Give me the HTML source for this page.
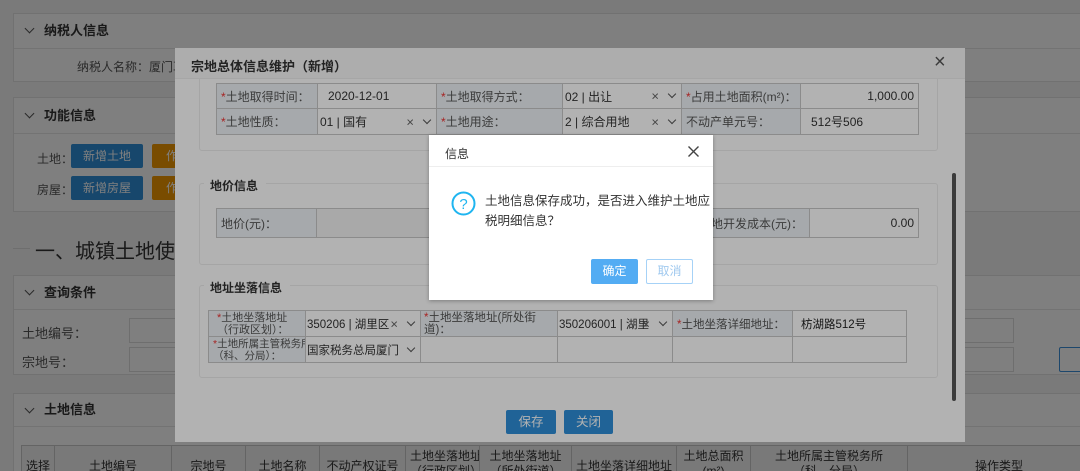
<!DOCTYPE html>
<html style="overflow:hidden;width:1080px;height:471px"><head><meta charset="utf-8"><style>
*{box-sizing:border-box;margin:0;padding:0}
body{width:1080px;height:471px;overflow:hidden;position:relative;background:#f4f4f4;font-family:"Liberation Sans","Noto Sans CJK SC",sans-serif;font-size:12px;color:#333}
.a{position:absolute}
.panel{position:absolute;border:1px solid #e2e2e2;background:#fff}
.ph{position:absolute;left:0;right:0;top:0;border-bottom:1px solid #e6e6e6;font-weight:bold;font-size:13px;padding-left:30px}
.chev{position:absolute;left:12px;width:7px;height:7px;border-right:1.5px solid #555;border-bottom:1.5px solid #555;transform:rotate(45deg)}
.btn{position:absolute;color:#fff;text-align:center;font-size:12px;line-height:24px;border-radius:2px}
.tb{position:absolute;border-collapse:collapse;table-layout:fixed;font-size:12px}
.tb td{border:1px solid #c8c8c8;padding:0 4px;white-space:nowrap;overflow:hidden}
.lb{background:#eef3f6;color:#555}
.r{color:#e33}
.sel{position:relative}
.x{position:absolute;right:22px;top:50%;transform:translateY(-50%);color:#666;font-size:13px}
.dn{position:absolute;right:6px;top:50%;width:6px;height:6px;margin-top:-5px;border-right:1.3px solid #555;border-bottom:1.3px solid #555;transform:rotate(45deg)}
.fs{position:absolute;border:1px solid #ececec;border-radius:3px}
.lg{position:absolute;background:#fff;font-weight:bold;font-size:12px;padding:0 8px 0 6px}
</style></head><body>
<div class="a" style="left:0;top:0;width:1080px;height:471px;overflow:hidden">
<div class="panel" style="left:13px;top:13px;width:1070px;height:69px">
 <div class="ph" style="height:35px;line-height:34px"><span class="chev" style="top:11px"></span>纳税人信息</div>
 <div class="a" style="left:63px;top:44px;font-size:12px;color:#555">纳税人名称：厦门革</div>
</div>
<div class="panel" style="left:13px;top:97px;width:1070px;height:115px">
 <div class="ph" style="height:36px;line-height:35px"><span class="chev" style="top:12px"></span>功能信息</div>
 <div class="a" style="left:23px;top:52px;color:#555">土地：</div>
 <div class="a" style="left:23px;top:83px;color:#555">房屋：</div>
 <div class="btn" style="left:57px;top:46px;width:72px;background:#2e8fd8">新增土地</div>
 <div class="btn" style="left:138px;top:46px;width:40px;background:#f39800">作</div>
 <div class="btn" style="left:57px;top:78px;width:72px;background:#2e8fd8">新增房屋</div>
 <div class="btn" style="left:138px;top:78px;width:40px;background:#f39800">作</div>
</div>
<div class="a" style="left:13px;top:248px;width:17px;border-top:1px solid #ddd"></div>
<div class="a" style="left:35px;top:235px;font-size:20px;color:#333">一、城镇土地使用税</div>
<div class="panel" style="left:13px;top:275px;width:1070px;height:100px">
 <div class="ph" style="height:34px;line-height:33px"><span class="chev" style="top:11px"></span>查询条件</div>
 <div class="a" style="left:8px;top:47px;font-size:13px;color:#555">土地编号：</div>
 <div class="a" style="left:8px;top:76px;font-size:13px;color:#555">宗地号：</div>
 <div class="a" style="left:115px;top:42px;width:80px;height:25px;border:1px solid #ddd"></div>
 <div class="a" style="left:115px;top:71px;width:80px;height:25px;border:1px solid #ddd"></div>
 <div class="a" style="left:950px;top:42px;width:50px;height:25px;border:1px solid #ddd"></div>
 <div class="a" style="left:950px;top:71px;width:50px;height:25px;border:1px solid #ddd"></div>
 <div class="a" style="left:1045px;top:71px;width:40px;height:25px;border:1px solid #3a8fd8;border-radius:2px"></div>
</div>
<div class="panel" style="left:13px;top:393px;width:1070px;height:90px">
 <div class="ph" style="height:33px;line-height:32px"><span class="chev" style="top:11px"></span>土地信息</div>
</div>
<table class="tb" style="left:21px;top:445px;width:1070px;height:40px;text-align:center;background:#f3f3f3">
<tr style="height:40px"><td style="width:33px">选择</td><td style="width:117px">土地编号</td><td style="width:74px">宗地号</td><td style="width:74px">土地名称</td><td style="width:86px">不动产权证号</td><td style="width:74px;line-height:15px;vertical-align:top;padding-top:3px">土地坐落地址<br>（行政区划）</td><td style="width:92px;line-height:15px;vertical-align:top;padding-top:3px">土地坐落地址<br>（所处街道）</td><td style="width:105px">土地坐落详细地址</td><td style="width:74px;line-height:15px;vertical-align:top;padding-top:3px">土地总面积<br>(m²)</td><td style="width:157px;line-height:15px;vertical-align:top;padding-top:3px">土地所属主管税务所<br>（科、分局）</td><td>操作类型</td></tr>
</table>
</div>
<div class="a" style="left:0;top:0;width:1080px;height:471px;background:rgba(0,0,0,0.5)"></div>

<div class="a" style="left:175px;top:48px;width:790px;height:394px;background:#fff;overflow:hidden">
 <div class="fs" style="left:24px;top:20px;width:739px;height:83px"></div>
 <table class="tb" style="left:41px;top:35px;width:703px">
 <tr style="height:25px"><td class="lb" style="width:101px"><span class="r">*</span>土地取得时间：</td><td style="width:119px;padding-left:10px">2020-12-01</td><td class="lb" style="width:126px"><span class="r">*</span>土地取得方式：</td><td class="sel" style="width:119px;padding-left:2px">02 | 出让<span class="x">×</span><span class="dn"></span></td><td class="lb" style="width:119px"><span class="r">*</span>占用土地面积(m²)：</td><td style="text-align:right">1,000.00</td></tr>
 <tr style="height:26px"><td class="lb"><span class="r">*</span>土地性质：</td><td class="sel" style="padding-left:2px">01 | 国有<span class="x">×</span><span class="dn"></span></td><td class="lb"><span class="r">*</span>土地用途：</td><td class="sel" style="padding-left:2px">2 | 综合用地<span class="x">×</span><span class="dn"></span></td><td class="lb">不动产单元号：</td><td style="padding-left:10px">512号506</td></tr>
 </table>
 <div class="a" style="left:0;top:0;width:790px;height:31px;background:#f8f8f8;border-bottom:1px solid #eee"></div>
 <div class="a" style="left:16px;top:8px;font-size:13px;font-weight:bold;color:#333">宗地总体信息维护（新增）</div>
 <div class="a" style="left:759px;top:3px;font-size:20px;color:#555">×</div>
 <div class="fs" style="left:24px;top:135px;width:739px;height:82px"></div>
 <div class="lg" style="left:29px;top:129px">地价信息</div>
 <table class="tb" style="left:41px;top:160px;width:703px">
 <tr style="height:29px"><td class="lb" style="width:100px">地价(元)：</td><td style="width:240px;text-align:right;background:#f2f2f2">0.00</td><td style="width:0"></td><td class="lb" style="width:244px;text-align:right;padding-right:6px">土地开发成本(元)：</td><td style="text-align:right">0.00</td></tr>
 </table>
 <div class="fs" style="left:24px;top:237px;width:739px;height:93px"></div>
 <div class="lg" style="left:29px;top:231px">地址坐落信息</div>
 <table class="tb" style="left:33px;top:262px;width:699px;font-size:11.5px">
 <tr style="height:26px"><td class="lb" style="width:97px;line-height:12px;white-space:normal;padding:0 2px 0 8px;font-size:11px"><span class="r">*</span>土地坐落地址<br>（行政区划）：</td><td class="sel" style="width:115px;padding-left:1px">350206 | 湖里区<span class="x">×</span><span class="dn"></span></td><td class="lb" style="width:137px;line-height:12px;white-space:normal;padding-left:3px"><span class="r">*</span>土地坐落地址(所处街道)：</td><td class="sel" style="width:115px;padding-left:1px">350206001 | 湖里<span class="x">×</span><span class="dn"></span></td><td class="lb" style="width:120px"><span class="r">*</span>土地坐落详细地址：</td><td style="padding-left:8px;color:#222">枋湖路512号</td></tr>
 <tr style="height:26px"><td class="lb" style="line-height:12px;padding:0 0 0 4px;font-size:10.5px"><span class="r">*</span>土地所属主管税务所<br>（科、分局）：</td><td class="sel" style="padding-left:1px">国家税务总局厦门<span class="dn"></span></td><td></td><td></td><td></td><td></td></tr>
 </table>
 <div class="a" style="left:777px;top:125px;width:4px;height:228px;background:#555;border-radius:2px"></div>
 <div class="btn" style="left:331px;top:362px;width:50px;background:#2e8fd8;font-size:12.5px">保存</div>
 <div class="btn" style="left:389px;top:362px;width:49px;background:#2e8fd8;font-size:12.5px">关闭</div>
</div>
<div class="a" style="left:175px;top:48px;width:790px;height:394px;background:rgba(0,0,0,0.3)"></div>

<div class="a" style="left:429px;top:135px;width:284px;height:165px;background:#fff;box-shadow:0 1px 4px rgba(0,0,0,0.3)">
 <div class="a" style="left:0;top:0;width:284px;height:32px;border-bottom:1px solid #eee"></div>
 <div class="a" style="left:16px;top:10px;font-size:12px;color:#333">信息</div>
 <svg class="a" style="left:258px;top:10px" width="13" height="13" viewBox="0 0 13 13"><path d="M1.5 1.5L11.5 11.5M11.5 1.5L1.5 11.5" stroke="#444" stroke-width="1.4"/></svg>
 <svg class="a" style="left:22px;top:56px" width="25" height="25" viewBox="0 0 25 25"><circle cx="12.5" cy="12.5" r="11" fill="none" stroke="#1fb5f0" stroke-width="2"/><text x="12.5" y="18" text-anchor="middle" font-family="Liberation Sans" font-size="15" fill="#1fb5f0">?</text></svg>
 <div class="a" style="left:56px;top:56px;font-size:12.5px;line-height:20px;color:#333;width:240px">土地信息保存成功，是否进入维护土地应<br>税明细信息？</div>
 <div class="btn" style="left:162px;top:124px;width:47px;height:25px;background:#53acf3;font-size:12px">确定</div>
 <div class="btn" style="left:217px;top:124px;width:47px;height:25px;border:1px solid #a6d2f7;color:#a0c9ef;background:#fff;line-height:23px">取消</div>
</div>
</body></html>
